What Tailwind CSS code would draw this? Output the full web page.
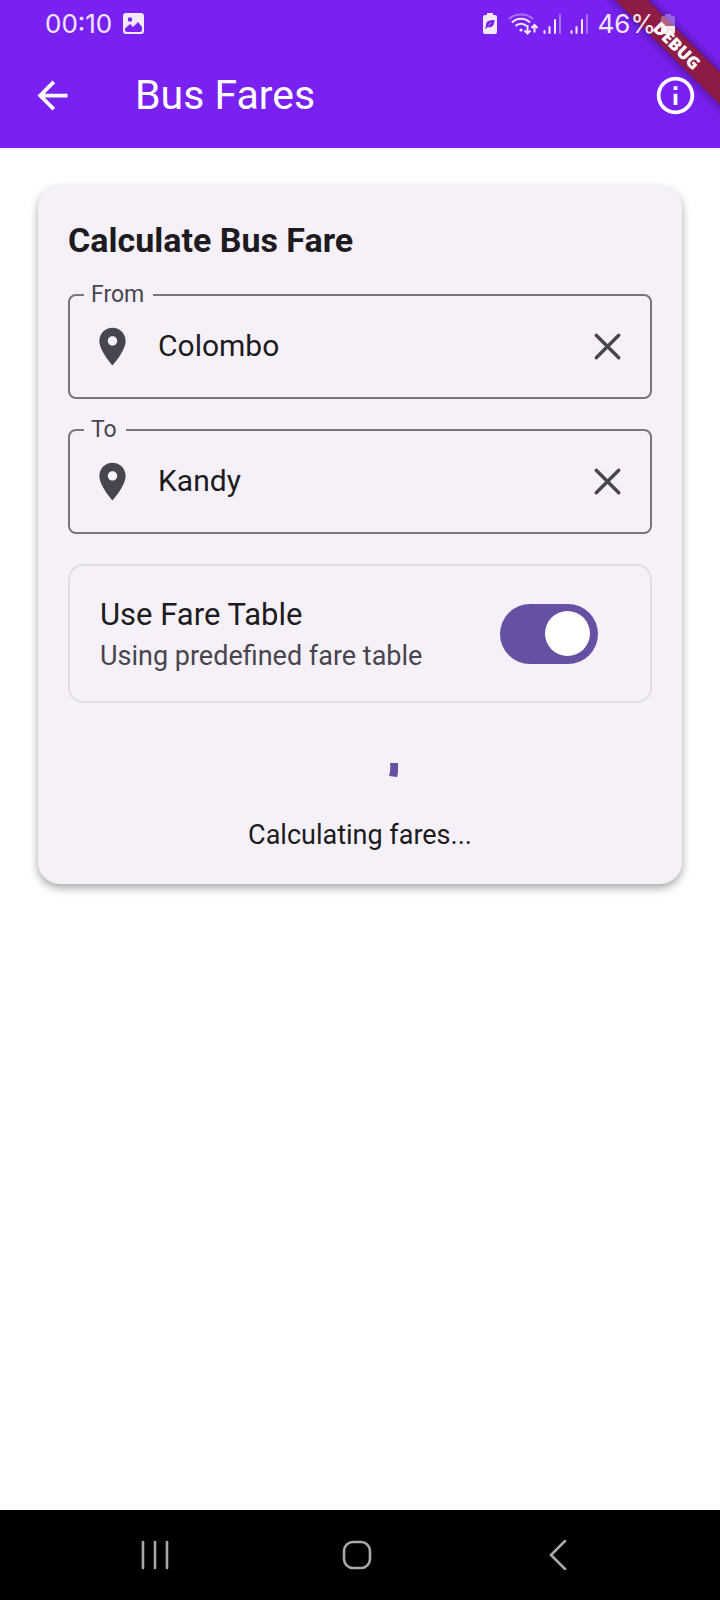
<!DOCTYPE html>
<html lang="en">
<head>
<meta charset="utf-8">
<meta name="viewport" content="width=device-width, initial-scale=1">
<title>Bus Fares</title>
<script src="https://cdn.jsdelivr.net/npm/@tailwindcss/browser@4"></script>
</head>
<body class="flex min-h-screen flex-col bg-white font-['Roboto',sans-serif] text-[#1d1b20]">

<header class="relative overflow-hidden bg-[#7921f2] text-white">
  <!-- Debug ribbon -->
  <div class="absolute -right-[42px] top-[34px] flex h-[23px] w-[170px] rotate-45 items-center justify-center bg-[#8e1a46] font-['Open_Sans',sans-serif] text-[17px] font-extrabold leading-none shadow-[0_0_12px_rgba(0,0,0,0.5)]">DEBUG</div>

  <!-- Status bar -->
  <div class="relative flex h-[43px] items-center justify-between pl-[45px] pr-[45px] pt-1 font-['Inter',sans-serif] text-[26px] leading-none text-white/90">
    <div class="flex items-center gap-[11px]">
      <span>00:10</span>
      <svg class="size-[21px]" viewBox="0 0 21 21" aria-hidden="true"><path fill="currentColor" fill-rule="evenodd" d="M3 0h15a3 3 0 0 1 3 3v15a3 3 0 0 1-3 3H3a3 3 0 0 1-3-3V3a3 3 0 0 1 3-3zM7 4.300a2.200 2.200 0 1 0 0 4.400a2.200 2.200 0 0 0 0-4.400zM2 15.500V17a2 2 0 0 0 2 2h13a2 2 0 0 0 2-2v-3l-4-5-5 5-3-3z"/></svg>
    </div>
    <div class="flex items-center">
      <svg class="h-[21px] w-[14px]" viewBox="0 0 14 21" aria-hidden="true"><path fill="currentColor" fill-rule="evenodd" d="M4 0h6v2h2a2 2 0 0 1 2 2v15a2 2 0 0 1-2 2H2a2 2 0 0 1-2-2V4a2 2 0 0 1 2-2h2zM11.500 7C6 7 2.500 8.500 3 13L2 15.500h1.500L4.500 14C9 15.500 11.500 12 11.500 7zM9 9.500L4.500 13.500L7 10.500z"/></svg>
      <svg class="ml-[11px] h-[22px] w-[30px]" viewBox="0 0 30 22" fill="none" stroke="currentColor" stroke-width="2" aria-hidden="true"><path opacity=".4" d="M1 6c6-6 18-6 24 0"/><path d="M4 9.500c5-5 13-5 18 0M7.500 13c3-3 8-3 11 0"/><circle cx="13" cy="17" r="1.600" fill="currentColor" stroke="none"/><path d="M19.500 12v8M16.500 17.500l3 3 3-3M26.500 19.500v-7M23.500 15l3-3 3 3"/></svg>
      <svg class="ml-[5px] h-[20px] w-[18px]" viewBox="0 0 18 20" fill="none" stroke="currentColor" stroke-width="2" stroke-linecap="round" aria-hidden="true"><path d="M1.500 17v2M6.500 13v6M12 6v13"/><path opacity=".4" d="M17 1v18"/></svg>
      <svg class="ml-[9px] h-[20px] w-[18px]" viewBox="0 0 18 20" fill="none" stroke="currentColor" stroke-width="2" stroke-linecap="round" aria-hidden="true"><path d="M1.500 17v2M6.500 13v6M12 6v13"/><path opacity=".4" d="M17 1v18"/></svg>
      <span class="ml-[10px]">46%</span>
      <svg class="ml-[5px] h-[20px] w-[14px]" viewBox="0 0 14 20" fill="currentColor" aria-hidden="true"><path opacity=".35" d="M4 0h6v2h2a2 2 0 0 1 2 2v8H0V4a2 2 0 0 1 2-2h2z"/><path d="M0 12h14v6a2 2 0 0 1-2 2H2a2 2 0 0 1-2-2z"/></svg>
    </div>
  </div>

  <!-- App bar -->
  <div class="relative flex h-[105px] items-center pl-[30px] pr-[22px]">
    <button type="button" aria-label="Back" class="size-[45px]">
      <svg class="size-full" viewBox="0 0 24 24" fill="currentColor" aria-hidden="true"><path d="M20 11H7.830l5.590-5.590L12 4l-8 8 8 8 1.410-1.410L7.830 13H20v-2z"/></svg>
    </button>
    <h1 class="ml-[60px] grow text-[41px] leading-none">Bus Fares</h1>
    <button type="button" aria-label="Information" class="size-[45px]">
      <svg class="size-full" viewBox="0 0 24 24" fill="currentColor" aria-hidden="true"><path d="M11 7h2v2h-2zm0 4h2v6h-2zm1-9C6.480 2 2 6.480 2 12s4.480 10 10 10 10-4.480 10-10S17.520 2 12 2zm0 18c-4.410 0-8-3.590-8-8s3.590-8 8-8 8 3.590 8 8-3.590 8-8 8z"/></svg>
    </button>
  </div>
</header>

<main class="grow p-[38px]">
  <section class="rounded-[22px] bg-[#f6f1f9] p-[30px] shadow-[0_4px_10px_rgba(0,0,0,0.35)]">
    <h2 class="text-[34px] font-bold leading-[48px]">Calculate Bus Fare</h2>

    <form class="mt-[30px] flex flex-col gap-[30px]">
      <div class="relative flex h-[105px] items-center rounded-[8px] border-2 border-[#79747e] px-[20px]">
        <label for="from" class="absolute -top-[14px] left-[14px] bg-[#f6f1f9] pl-[7px] pr-[9px] text-[23px] leading-[26px] text-[#49454f]">From</label>
        <svg class="size-[45px] shrink-0 text-[#49454f]" viewBox="0 0 24 24" fill="currentColor" aria-hidden="true"><path d="M12 2C8.130 2 5 5.130 5 9c0 5.250 7 13 7 13s7-7.750 7-13c0-3.870-3.130-7-7-7zm0 9.500c-1.380 0-2.500-1.120-2.500-2.500s1.120-2.500 2.500-2.500 2.500 1.120 2.500 2.500-1.120 2.500-2.500 2.500z"/></svg>
        <input id="from" type="text" value="Colombo" class="ml-[23px] min-w-0 grow bg-transparent pb-[2px] text-[30px] leading-[45px] outline-none">
        <button type="button" aria-label="Clear from" class="size-[45px] shrink-0 text-[#49454f]">
          <svg class="size-full" viewBox="0 0 24 24" fill="none" stroke="currentColor" stroke-width="1.800" stroke-linecap="round" aria-hidden="true"><path d="M6 6l12 12M18 6L6 18"/></svg>
        </button>
      </div>

      <div class="relative flex h-[105px] items-center rounded-[8px] border-2 border-[#79747e] px-[20px]">
        <label for="to" class="absolute -top-[14px] left-[14px] bg-[#f6f1f9] pl-[7px] pr-[9px] text-[23px] leading-[26px] text-[#49454f]">To</label>
        <svg class="size-[45px] shrink-0 text-[#49454f]" viewBox="0 0 24 24" fill="currentColor" aria-hidden="true"><path d="M12 2C8.130 2 5 5.130 5 9c0 5.250 7 13 7 13s7-7.750 7-13c0-3.870-3.130-7-7-7zm0 9.500c-1.380 0-2.500-1.120-2.500-2.500s1.120-2.500 2.500-2.500 2.500 1.120 2.500 2.500-1.120 2.500-2.500 2.500z"/></svg>
        <input id="to" type="text" value="Kandy" class="ml-[23px] min-w-0 grow bg-transparent pb-[2px] text-[30px] leading-[45px] outline-none">
        <button type="button" aria-label="Clear to" class="size-[45px] shrink-0 text-[#49454f]">
          <svg class="size-full" viewBox="0 0 24 24" fill="none" stroke="currentColor" stroke-width="1.800" stroke-linecap="round" aria-hidden="true"><path d="M6 6l12 12M18 6L6 18"/></svg>
        </button>
      </div>

      <div class="flex items-center justify-between rounded-[15px] border-2 border-[#e0dfe3] py-[26px] pl-[30px] pr-[52px]">
        <label for="fare-table" class="flex flex-col">
          <span class="text-[31px] leading-[45px]">Use Fare Table</span>
          <span class="text-[27px] leading-[38px] text-[#49454f]">Using predefined fare table</span>
        </label>
        <input id="fare-table" type="checkbox" role="switch" checked class="flex h-[60px] w-[98px] shrink-0 appearance-none items-center rounded-full bg-[#6750a4] px-[8px] before:size-[45px] before:rounded-full before:bg-white before:content-[''] checked:justify-end">
      </div>
    </form>

    <div role="status" class="mt-[22px] flex flex-col items-center gap-[16px]">
      <svg class="size-[76px]" viewBox="0 0 76 76" aria-hidden="true"><path fill="#6750a4" d="M68 38h8a38 38 0 0 1-1 14l-8-1a30 30 0 0 0 1-13z"/></svg>
      <p class="text-[27px] leading-[37px]">Calculating fares...</p>
    </div>
  </section>
</main>

<!-- System navigation -->
<nav class="flex h-[90px] items-center justify-between bg-black pl-[125px] pr-[132px] text-[#a9a9a9]">
  <button type="button" aria-label="Recent apps" class="flex size-[60px] items-center justify-center">
    <svg class="size-[30px]" viewBox="0 0 30 30" fill="none" stroke="currentColor" stroke-width="2.600" stroke-linecap="round" aria-hidden="true"><path d="M3 2v26M15 2v26M27 2v26"/></svg>
  </button>
  <button type="button" aria-label="Home" class="flex size-[60px] items-center justify-center">
    <svg class="size-[30px]" viewBox="0 0 30 30" fill="none" stroke="currentColor" stroke-width="2.600" aria-hidden="true"><rect x="2" y="2" width="26" height="26" rx="9"/></svg>
  </button>
  <button type="button" aria-label="Back" class="flex size-[60px] items-center justify-center">
    <svg class="size-[30px]" viewBox="0 0 30 30" fill="none" stroke="currentColor" stroke-width="2.600" stroke-linecap="round" aria-hidden="true"><path d="M22 1L8 15l14 14"/></svg>
  </button>
</nav>
</body>
</html>
